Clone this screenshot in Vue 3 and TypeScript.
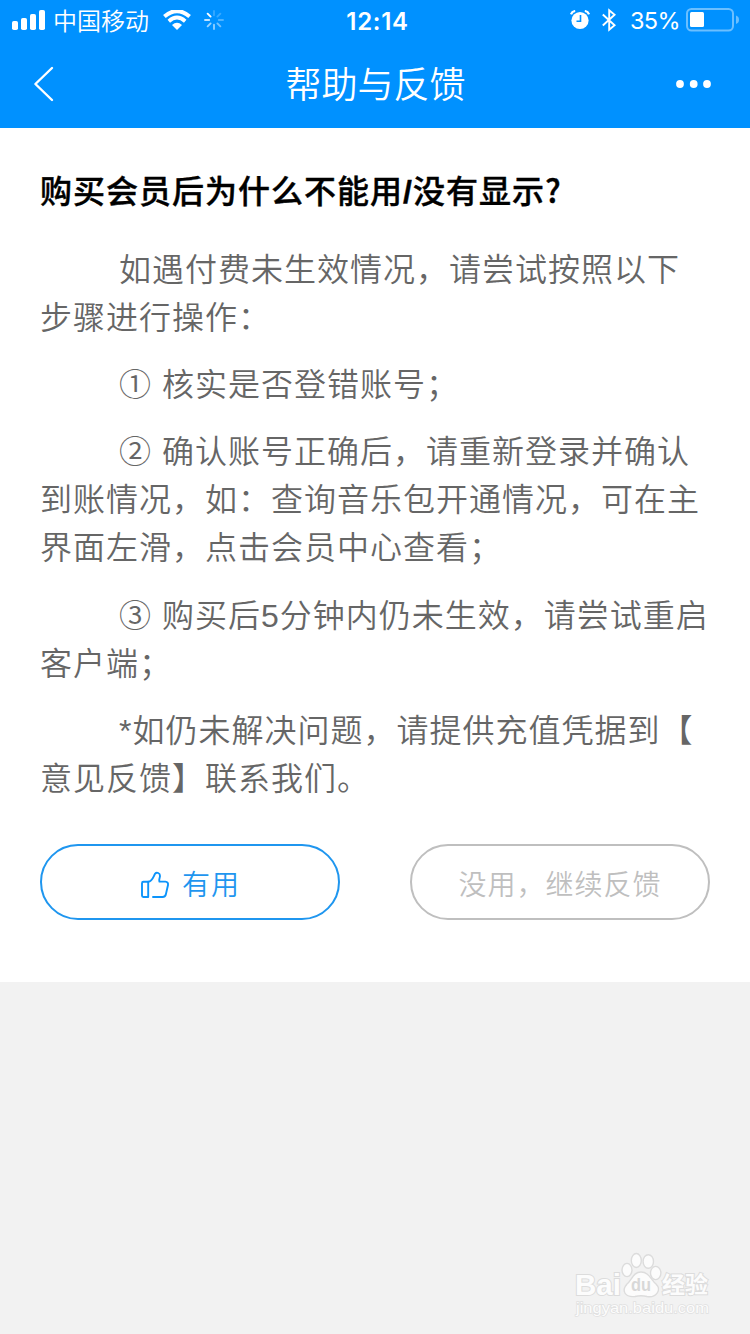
<script setup lang="ts">
interface Paragraph {
  lines: string[]
}

const paragraphs: Paragraph[] = [
  { lines: ['如遇付费未生效情况，请尝试按照以下', '步骤进行操作：'] },
  { lines: ['① 核实是否登错账号；'] },
  { lines: ['② 确认账号正确后，请重新登录并确认', '到账情况，如：查询音乐包开通情况，可在主', '界面左滑，点击会员中心查看；'] },
  { lines: ['③ 购买后5分钟内仍未生效，请尝试重启', '客户端；'] },
  { lines: ['*如仍未解决问题，请提供充值凭据到【', '意见反馈】联系我们。'] },
]

const spokes: number[] = [0.2, 0.22, 0.3, 0.45, 0.55, 0.6, 0.75, 1]
</script>

<template>
  <div class="screen">
    <header class="top">
      <div class="status">
        <div class="status-left">
          <svg class="signal" width="34" height="20" viewBox="0 0 34 20" fill="#fff">
            <rect x="0" y="11" width="6" height="9" rx="1.8" />
            <rect x="9" y="8" width="6" height="12" rx="1.8" />
            <rect x="18" y="4" width="6" height="16" rx="1.8" />
            <rect x="27" y="0" width="6" height="20" rx="1.8" />
          </svg>
          <span class="carrier">中国移动</span>
          <svg class="wifi" width="28" height="20" viewBox="0 0 28 20" fill="none" stroke="#fff">
            <path d="M1.4 6.6Q14 -4.4 26.6 6.6" stroke-width="4" />
            <path d="M5.8 11.2Q14 4 22.2 11.2" stroke-width="3.8" />
            <path d="M9 14.9Q14 10.7 19 14.9L14 20Z" fill="#fff" stroke="none" />
          </svg>
          <svg class="spinner" width="20" height="20" viewBox="-10 -10 20 20" stroke="#fff" stroke-width="1.9" stroke-linecap="round">
            <line v-for="(o, i) in spokes" :key="i" x1="0" y1="-4.8" x2="0" y2="-9" :opacity="o" :transform="`rotate(${i * 45})`" />
          </svg>
        </div>
        <span class="clock">12:14</span>
        <div class="status-right">
          <svg class="alarm" width="20" height="20" viewBox="0 0 20 20">
            <circle cx="10" cy="10.5" r="8.6" fill="#fff" />
            <path d="M1 4.3Q2 1.4 5.2 1M19 4.3Q18 1.4 14.8 1" fill="none" stroke="#fff" stroke-width="2.2" />
            <path d="M10.5 5V11.3H6.5" fill="none" stroke="#0091ff" stroke-width="1.6" />
          </svg>
          <svg class="bluetooth" width="14" height="24" viewBox="0 0 14 24" fill="none" stroke="#fff" stroke-width="1.9">
            <path d="M.8 6.5L12.6 17.2 7.2 21.8V2.2L12.6 6.8.8 17.5" />
          </svg>
          <span class="percent">35%</span>
          <svg class="battery" width="54" height="24" viewBox="0 0 54 24">
            <rect x="1" y="1" width="46" height="21.5" rx="4.5" fill="none" stroke="#fff" stroke-width="2" opacity=".42" />
            <rect x="4" y="4" width="14" height="15" rx="1.5" fill="#fff" />
            <path d="M50 7.5Q53 8.5 53 11.7T50 16Z" fill="#fff" opacity=".42" />
          </svg>
        </div>
      </div>
      <nav class="nav">
        <svg class="back" width="22" height="36" viewBox="0 0 22 36" fill="none" stroke="#fff" stroke-width="2.4" stroke-linecap="round" stroke-linejoin="round">
          <path d="M19 2L2.4 18 19 34" />
        </svg>
        <h1 class="title">帮助与反馈</h1>
        <svg class="more" width="36" height="8" viewBox="0 0 36 8" fill="#fff">
          <circle cx="4" cy="4" r="3.9" />
          <circle cx="17.7" cy="4" r="3.9" />
          <circle cx="31" cy="4" r="3.9" />
        </svg>
      </nav>
    </header>

    <main class="article">
      <h2 class="question">购买会员后为什么不能用<span class="slash">/</span>没有显示?</h2>
      <p v-for="(p, i) in paragraphs" :key="i" class="para">
        <span v-for="line in p.lines" :key="line" class="line">{{ line }}</span>
      </p>
      <div class="actions">
        <button class="btn useful" type="button">
          <svg class="thumb" width="30" height="28" viewBox="0 0 30 28" fill="none" stroke="#0c94fb" stroke-width="1.9" stroke-linecap="round" stroke-linejoin="round">
            <path d="M3.4 10.8H8.2V26H3.4Q2 26 2 24.6V12.2Q2 10.8 3.4 10.8Z" />
            <path d="M8.2 10.8C12.5 10.4 13.4 5.4 15.2 2.6C16.6.8 20.2 2 20 5C19.9 7.2 18.6 8.8 19.4 10.6H25.4Q28.4 10.8 28 14L25.8 23.6Q25.1 25.9 22.6 26H13" />
          </svg>
          <span>有用</span>
        </button>
        <button class="btn useless" type="button">没用，继续反馈</button>
      </div>
    </main>

    <footer class="watermark">
      <svg width="142" height="72" viewBox="0 0 142 72" fill="#fcfcfc" stroke="#dcdcdc" stroke-width="1.4">
        <g class="brand">
          <text x="5" y="47" font-size="29" textLength="46" lengthAdjust="spacingAndGlyphs">Bai</text>
          <g transform="translate(2 1)">
            <ellipse cx="55" cy="21" rx="5" ry="6.6" />
            <ellipse cx="64.3" cy="11.5" rx="5" ry="7" />
            <ellipse cx="76.3" cy="12.5" rx="5.2" ry="6.8" />
            <ellipse cx="83.7" cy="24" rx="5.2" ry="6.6" />
            <path d="M69 23C77 23 79 31 84 35C90 41 84 49 75 47.5Q69 46 63 47.5C53 48.5 49 42 55 35C60 31 61 23 69 23Z" />
          </g>
          <text class="du" x="61" y="43" font-size="19" textLength="20" lengthAdjust="spacingAndGlyphs">du</text>
          <text x="92" y="45" font-size="23" textLength="46" lengthAdjust="spacingAndGlyphs">经验</text>
        </g>
        <text class="site" x="6" y="65" font-size="15" textLength="133" lengthAdjust="spacingAndGlyphs">jingyan.baidu.com</text>
      </svg>
    </footer>
  </div>
</template>

<style>
html,
body {
  margin: 0;
  background: #f2f2f2;
}
</style>

<style scoped>
.screen {
  width: 750px;
  height: 1334px;
  display: flex;
  flex-direction: column;
  background: #f2f2f2;
  font-family: Inter, "Noto Sans CJK SC", sans-serif;
  text-spacing-trim: space-all;
  overflow: hidden;
}
.top {
  height: 128px;
  background: #0091ff;
  color: #fff;
}
.status {
  height: 40px;
  display: grid;
  grid-template-columns: 1fr auto 1fr;
  align-items: center;
  padding: 0 10px 0 12px;
}
.status-left,
.status-right {
  display: flex;
  align-items: center;
}
.status-right {
  justify-content: flex-end;
}
.status svg {
  flex: none;
}
.carrier {
  margin-left: 7px;
  font: 350 24px/40px "Noto Sans CJK SC", sans-serif;
}
.wifi {
  margin-left: 14px;
}
.spinner {
  margin-left: 13px;
}
.clock {
  padding: 3px 0 0 3px;
  font-size: 24px;
  font-weight: 600;
  line-height: 37px;
  letter-spacing: 0.7px;
}
.bluetooth {
  margin-left: 12px;
}
.percent {
  margin: 0 6px 0 14px;
  padding-top: 2px;
  font-size: 23.5px;
  line-height: 38px;
  letter-spacing: -0.6px;
}
.nav {
  height: 88px;
  display: grid;
  grid-template-columns: 1fr auto 1fr;
  align-items: center;
  padding: 0 38px 0 33px;
}
.more {
  justify-self: end;
}
.title {
  margin: 0 0 4px;
  padding-left: 6px;
  font: 350 36px/84px "Noto Sans CJK SC", sans-serif;
}
.article {
  height: 854px;
  box-sizing: border-box;
  padding: 37px 40px 0;
  background: #fff;
}
.question {
  margin: 0 0 33px;
  height: 48px;
  font: 500 32px/48px "Noto Sans CJK SC", sans-serif;
  letter-spacing: 1px;
  color: #000;
  -webkit-text-stroke: 0.4px #000;
  white-space: nowrap;
}
.slash {
  font-family: "Liberation Sans", sans-serif;
  font-weight: 700;
}
.para {
  margin: 0 0 19.2px;
  font: 350 32px/48px "Liberation Sans", "Noto Sans CJK SC", sans-serif;
  letter-spacing: 1px;
  color: #666;
  text-indent: 79px;
}
.line {
  display: block;
  white-space: nowrap;
}
.line + .line {
  text-indent: 0;
}
.actions {
  display: flex;
  justify-content: space-between;
  margin-top: 41px;
}
.btn {
  width: 300px;
  height: 76px;
  box-sizing: border-box;
  padding: 3px 0 0;
  display: flex;
  align-items: center;
  justify-content: center;
  border: 2px solid;
  border-radius: 38px;
  background: #fff;
  font: 350 28px/40px "Noto Sans CJK SC", sans-serif;
  letter-spacing: 1px;
}
.thumb {
  margin-top: 4px;
}
.useful {
  gap: 12px;
  border-color: #1f96ef;
  color: #1f96ef;
}
.useless {
  border-color: #bfbfbf;
  color: #bfbfbf;
}
.watermark {
  margin: auto 38px 14px auto;
  height: 72px;
}
.brand text {
  font-family: "Liberation Sans", "Noto Sans CJK SC", sans-serif;
  font-weight: 700;
  paint-order: stroke;
  stroke-width: 2px;
}
.brand .du {
  fill: #d8d8d8;
  stroke: none;
}
.site {
  font-family: "Liberation Sans", sans-serif;
  paint-order: stroke;
  stroke: #e0e0e0;
}
</style>
